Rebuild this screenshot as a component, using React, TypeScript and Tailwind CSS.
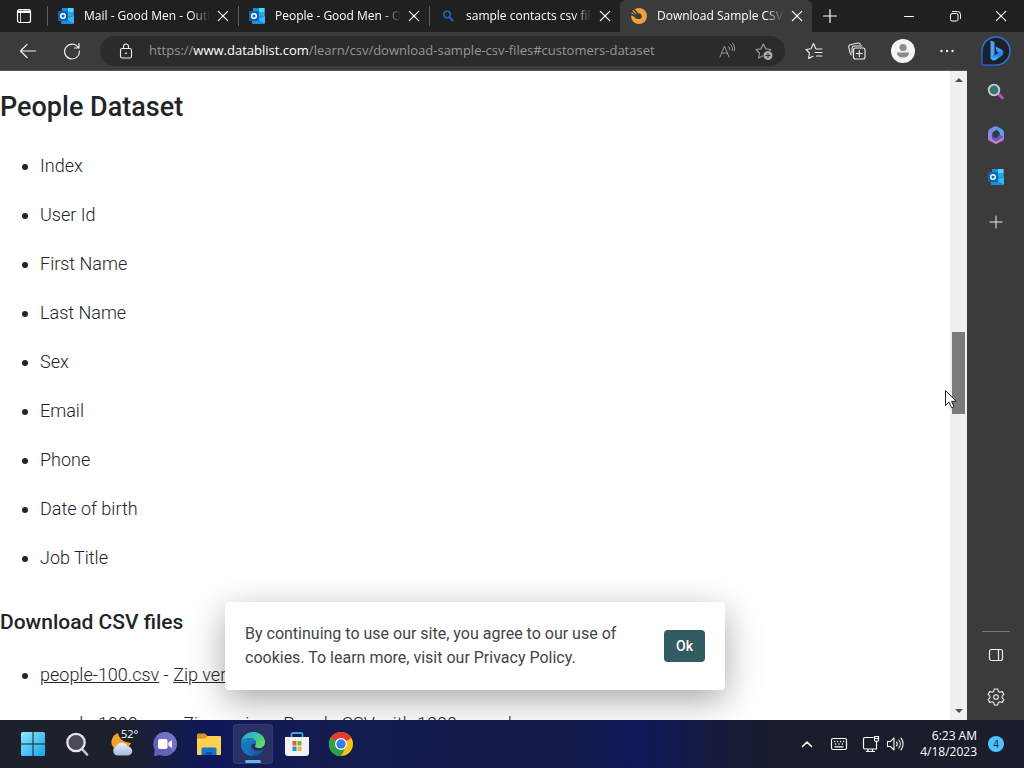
import React from 'react';

const tabs = [
    { title: 'Mail - Good Men - Outlook', icon: 'outlook', active: false },
    { title: 'People - Good Men - Outlook', icon: 'outlook', active: false },
    { title: 'sample contacts csv file - Search', icon: 'search', active: false },
    { title: 'Download Sample CSV Files', icon: 'datablist', active: true }
];

const columns = [
    'Index',
    'User Id',
    'First Name',
    'Last Name',
    'Sex',
    'Email',
    'Phone',
    'Date of birth',
    'Job Title'
];

const files = [
    { name: 'people-100.csv', desc: 'People CSV with 100 records' },
    { name: 'people-1000.csv', desc: 'People CSV with 1000 records' }
];

const line = {
    fill: 'none',
    stroke: 'currentColor',
    strokeLinecap: 'round' as const,
    strokeLinejoin: 'round' as const
};

const OutlookIcon = () => (
    <svg className="size-4 shrink-0" viewBox="0 0 16 16">
        <path d="M4 0h11.500v8H4z" fill="#1490df" />
        <path d="M10 0h5.500v4H10z" fill="#50d9ff" />
        <path d="M10 4h5.500v4H10z" fill="#28a8ea" />
        <path d="M4 4h6v5H4z" fill="#0364b8" />
        <path d="M3 8h13v7a1 1 0 0 1-1 1H4a1 1 0 0 1-1-1z" fill="#1a8fdb" />
        <path d="M16 8v7.500L8 11z" fill="#35b8f1" />
        <rect y="3" width="10" height="10" rx="1" fill="#0f62b5" />
        <circle cx="5" cy="8" r="2.300" fill="none" stroke="#fff" strokeWidth="1.500" />
    </svg>
);

const TabIcon = ({ name }: { name: string }) => {
    if (name === 'outlook') {
        return <OutlookIcon />;
    }
    if (name === 'search') {
        return (
            <svg className="size-4 shrink-0 text-[#1b68c9]" viewBox="0 0 16 16" {...line}>
                <circle cx="7" cy="6.500" r="3.300" strokeWidth="1.600" />
                <path d="M9.500 9.200l3 3.300" strokeWidth="1.900" />
            </svg>
        );
    }
    return (
        <svg className="size-4 shrink-0" viewBox="0 0 16 16">
            <circle cx="8" cy="8" r="8" fill="#eda13c" />
            <path d="M0 5.500C2 6.500 3.500 6.500 5 7c.5-2 3.500-2.500 5-.5 2 2.500 0 5-2.500 4.500C5 11 4 9.500 3 8.500L0 7.500z" fill="#3b3b3b" />
            <path d="M3 1l4 5.500M1 3.500L6 8" stroke="#3b3b3b" strokeWidth="1.500" />
        </svg>
    );
};

const Cross = ({ className }: { className: string }) => (
    <svg className={className} viewBox="0 0 12 12" {...line}>
        <path d="M2 2l8 8M10 2l-8 8" strokeWidth="1.100" />
    </svg>
);

const TabBar = () => (
    <div className="flex h-8 shrink-0 items-center bg-[#202020] text-white">
        <button aria-label="Tab actions" className="flex w-[47px] shrink-0 justify-center">
            <svg className="size-4" viewBox="0 0 16 16" {...line}>
                <rect x="1.500" y="1.500" width="13" height="13" rx="2" strokeWidth="1.200" />
                <path d="M2 3h12v1.500H2z" fill="currentColor" />
                <path d="M4.500 5v9" strokeWidth=".8" />
            </svg>
        </button>
        {tabs.map((tab) => (
            <div
                key={tab.title}
                className={
                    tab.active
                        ? 'flex h-8 w-48 items-center rounded-t-md bg-[#3b3b3b] pr-2 pl-[11px]'
                        : 'flex h-8 w-[191px] items-center pr-2'
                }
            >
                {!tab.active && <span className="mr-2.5 h-5 w-px shrink-0 bg-[#5c5c5c]" />}
                <button className="flex min-w-0 flex-1 items-center gap-2.5 text-left">
                    <TabIcon name={tab.icon} />
                    <span className="flex-1 overflow-hidden text-xs whitespace-nowrap [mask-image:linear-gradient(to_right,black_85%,transparent)]">
                        {tab.title}
                    </span>
                </button>
                <button aria-label="Close tab" className="ml-1.5 shrink-0">
                    <Cross className="size-3.5" />
                </button>
            </div>
        ))}
        <button aria-label="New tab" className="ml-2.5">
            <svg className="size-4" viewBox="0 0 16 16" {...line}>
                <path d="M8 1.500v13M1.500 8h13" strokeWidth="1.200" />
            </svg>
        </button>
        <div className="ml-auto flex shrink-0 items-center gap-8 pr-4">
            <button aria-label="Minimize">
                <svg className="size-3.5" viewBox="0 0 14 14" {...line}>
                    <path d="M2.500 7.500h9" />
                </svg>
            </button>
            <button aria-label="Restore">
                <svg className="size-3.5" viewBox="0 0 14 14" {...line}>
                    <rect x="2.500" y="4.500" width="7.500" height="7.500" rx="1.500" />
                    <path d="M4.500 2.500H9.500a3 3 0 0 1 3 3V9.500" />
                </svg>
            </button>
            <button aria-label="Close">
                <Cross className="size-3.5" />
            </button>
        </div>
    </div>
);

const Toolbar = () => (
    <div className="flex h-[39px] shrink-0 items-center border-b border-[#555] bg-[#3b3b3b] text-[#eee]">
        <button aria-label="Back" className="ml-[19px]">
            <svg className="size-[18px]" viewBox="0 0 18 18" {...line}>
                <path d="M16.500 9H1.500M8 2.500L1.500 9 8 15.500" strokeWidth="1.200" />
            </svg>
        </button>
        <button aria-label="Refresh" className="ml-[26px]">
            <svg className="size-[18px]" viewBox="0 0 18 18" {...line}>
                <path d="M15.500 6A7.400 7.400 0 1 0 16.400 9M16 1.500V6h-4.500" strokeWidth="1.200" />
            </svg>
        </button>
        <div className="ml-[19px] flex h-[30px] min-w-0 flex-1 items-center rounded-full bg-[#2b2b2b] pr-3 pl-[18px]">
            <svg className="size-4 shrink-0" viewBox="0 0 16 16" {...line}>
                <rect x="2.500" y="5.500" width="11" height="9.500" rx="1.800" strokeWidth="1.100" />
                <path d="M5.500 5.500V3.500a2.500 2.500 0 0 1 5 0v2" strokeWidth="1.100" />
                <circle cx="8" cy="10.300" r=".5" fill="currentColor" />
            </svg>
            <p className="ml-[15px] flex-1 overflow-hidden text-[13px] whitespace-nowrap text-[#969696]">
                https://<span className="text-white">www.datablist.com</span>
                /learn/csv/download-sample-csv-files#customers-dataset
            </p>
            <button aria-label="Read aloud" className="text-[#999]">
                <svg className="size-[18px]" viewBox="0 0 18 18" {...line}>
                    <path d="M1 15L5.500 4 10 15M2.600 11h5.800M9.500 4.500c1 .8 1.300 2 1 3.200M11.500 2.500c1.800 1.500 2.300 3.800 1.700 6M13.600 1.200c2 2 2.500 5 1.700 7.500" />
                </svg>
            </button>
            <button aria-label="Add to favorites" className="ml-[18px] text-[#999]">
                <svg className="size-[18px]" viewBox="0 0 18 18" {...line}>
                    <path d="M7.500 14L3.700 16l.8-5L1 7.500l5-.7L8.300 2l2.400 4.800 5 .7-1 1.200" strokeWidth="1.200" />
                    <circle cx="13" cy="13.500" r="4.500" fill="#aaa" stroke="none" />
                    <path d="M13 11.500v4M11 13.500h4" stroke="#2b2b2b" />
                </svg>
            </button>
        </div>
        <div className="flex items-center gap-6 pr-3 pl-5">
            <button aria-label="Favorites">
                <svg className="size-[18px]" viewBox="0 0 18 18" {...line}>
                    <path d="M11 7L8.500 1.500 6 6.700l-5 .8L4.500 11l-.9 5.500L8 14.300M11 7h6M10 10.500h7M11.500 14H17" strokeWidth="1.100" />
                </svg>
            </button>
            <button aria-label="Collections">
                <svg className="size-5" viewBox="0 0 20 20" {...line}>
                    <path d="M4.500 14l-1.300-1.500-1.500-6.500a2 2 0 0 1 1.500-2.300L11 2a2 2 0 0 1 2.300 1.500" strokeWidth="1.100" />
                    <path d="M5 12V7.500A2.500 2.500 0 0 1 7.500 5h7.500" strokeWidth="1.100" />
                    <rect x="6.500" y="7" width="11.500" height="11" rx="2" fill="#3b3b3b" strokeWidth="1.100" />
                    <path d="M12.300 9.500v6M9.300 12.500h6" strokeWidth="1.100" />
                </svg>
            </button>
            <button aria-label="Profile">
                <svg className="size-6" viewBox="0 0 24 24">
                    <circle cx="12" cy="12" r="12" fill="#f4f4f4" />
                    <circle cx="12" cy="8.500" r="3.600" fill="#8b8b8b" />
                    <path d="M6 13.500h12c.3 3-2.500 5-6 5s-6.300-2-6-5z" fill="#8b8b8b" />
                </svg>
            </button>
            <button aria-label="Settings and more">
                <svg className="size-4" viewBox="0 0 16 16" fill="currentColor">
                    <circle cx="2.500" cy="8" r="1.200" />
                    <circle cx="8" cy="8" r="1.200" />
                    <circle cx="13.500" cy="8" r="1.200" />
                </svg>
            </button>
        </div>
    </div>
);

const CookieNotice = () => (
    <div className="absolute bottom-[30px] left-1/2 flex w-[500px] -translate-x-1/2 items-center justify-between rounded bg-white p-5 shadow-[0_10px_35px_rgba(0,0,0,0.35)]">
        <p className="w-96 text-base text-[#444]">
            By continuing to use our site, you agree to our use of cookies. To learn more, visit
            our Privacy Policy.
        </p>
        <button className="h-8 rounded bg-[#335c62] px-3 text-sm font-medium text-white">Ok</button>
    </div>
);

const Scrollbar = () => (
    <div className="flex w-[17px] shrink-0 flex-col items-center bg-[#f0f0f0]">
        <svg className="h-[17px] w-2" viewBox="0 0 8 17" fill="#505050">
            <path d="M0 11l4-4 4 4z" />
        </svg>
        <div className="flex w-full flex-1 flex-col items-center">
            <div className="flex-[244]" />
            <div className="w-[13px] flex-[82] bg-[#7a7a7a]" />
            <div className="flex-[289]" />
        </div>
        <svg className="h-[17px] w-2" viewBox="0 0 8 17" fill="#505050">
            <path d="M0 6l4 4 4-4z" />
        </svg>
    </div>
);

const Page = () => (
    <div className="relative min-w-0 flex-1 overflow-hidden bg-white font-[Roboto,sans-serif] text-[#212529]">
        <h2 className="mt-5 text-[27px] leading-8 font-medium">People Dataset</h2>
        <ul className="mt-7 flex list-disc flex-col gap-5 pl-10 text-lg leading-[29px] font-light">
            {columns.map((column) => (
                <li key={column}>{column}</li>
            ))}
        </ul>
        <h3 className="mt-9 text-[21px] leading-7 font-medium">Download CSV files</h3>
        <ul className="mt-6 flex list-disc flex-col gap-5 pl-10 text-lg leading-[29px] font-light">
            {files.map((file) => (
                <li key={file.name}>
                    <a href={'#' + file.name} className="underline">
                        {file.name}
                    </a>
                    {' - '}
                    <a href={'#zip-' + file.name} className="underline">
                        Zip version
                    </a>
                    {' - ' + file.desc}
                </li>
            ))}
        </ul>
        <CookieNotice />
    </div>
);

const Sidebar = () => (
    <div className="flex w-[57px] shrink-0 flex-col items-center bg-[#3b3b3b] pt-1 pb-3.5 text-[#eee]">
        <button aria-label="Bing">
            <svg className="size-[30px]" viewBox="0 0 30 30">
                <defs>
                    <linearGradient id="bing-ring" x1="0" y1="1" x2="1" y2="0">
                        <stop offset="0" stopColor="#2b53d0" />
                        <stop offset=".5" stopColor="#1c7fd0" />
                        <stop offset="1" stopColor="#3868dc" />
                    </linearGradient>
                    <linearGradient id="bing-b" x1="0" y1="0" x2="0" y2="1">
                        <stop offset="0" stopColor="#54a8ff" />
                        <stop offset=".6" stopColor="#1b82f2" />
                        <stop offset="1" stopColor="#49c8f6" />
                    </linearGradient>
                </defs>
                <path d="M1 29V15A14 14 0 1 1 15 29z" fill="#1d2029" stroke="url(#bing-ring)" strokeWidth="1.500" />
                <path d="M9.500 4.500l4 1.500v12.500l-4 4z" fill="#4aa3fb" />
                <path d="M14.500 10.500l6.500 3.200c2 1.800 1.800 4.600-.2 6L14.500 24c-2.500 1.200-5 0-5-3l8-4-1.800-1.500z" fill="url(#bing-b)" />
            </svg>
        </button>
        <button aria-label="Search" className="mt-[17px]">
            <svg className="size-[18px]" viewBox="0 0 18 18" fill="none" strokeLinecap="round">
                <path d="M11.500 11l4 4" stroke="#b04cd2" strokeWidth="3" />
                <circle cx="7" cy="7" r="5.300" fill="#357378" stroke="#c9cdcb" strokeWidth="1.800" />
            </svg>
        </button>
        <button aria-label="Microsoft 365" className="mt-[25px]">
            <svg className="size-[18px]" viewBox="0 0 18 18">
                <path d="M7 .5L2.500 3Q1 4 1 6v6l4.500 2V6.500L12 2z" fill="#7f8ae6" />
                <path d="M7 .5l2.500-.3 6 3.300Q17 4.500 17 6.500V12l-4.500-3V6.500z" fill="#5c9ff0" />
                <path d="M1 10.500l8 4.500 8-5v2.500Q17 14 15 15l-5 2.700q-1 .5-2 0L2 14.500q-1-.6-1-2z" fill="#c77bc9" />
                <path d="M12.500 9l4.500 2-8 4.500-5-3z" fill="#5a5fc4" />
                <path d="M5.500 7.500L9 5.500l4 2.300L9.500 12l-4-1.500z" fill="#363849" />
            </svg>
        </button>
        <button aria-label="Outlook" className="mt-[25px]">
            <OutlookIcon />
        </button>
        <button aria-label="Add app" className="mt-[30px]">
            <svg className="size-3.5" viewBox="0 0 14 14" {...line}>
                <path d="M7 1v12M1 7h12" />
            </svg>
        </button>
        <div className="mt-auto h-px w-7 bg-[#777]" />
        <button aria-label="Hide sidebar" className="mt-[15px]">
            <svg className="size-4" viewBox="0 0 16 16" {...line}>
                <rect x="1.500" y="2.500" width="13" height="11" rx="2" strokeWidth="1.200" />
                <path d="M10.500 3v10" strokeWidth="1.200" />
            </svg>
        </button>
        <button aria-label="Sidebar settings" className="mt-[25px]">
            <svg className="size-[18px]" viewBox="0 0 18 18" {...line}>
                <path d="M7.300 1h3.400l.6 2.400 1.500.8 2.300-.8 1.800 3-1.800 1.700v1.800l1.800 1.700-1.800 3-2.300-.8-1.500.8-.6 2.400H7.300l-.6-2.400-1.500-.8-2.300.8-1.800-3 1.800-1.700V8.100L1.100 6.400l1.800-3 2.300.8 1.500-.8z" strokeWidth="1.100" />
                <circle cx="9" cy="9" r="2.300" strokeWidth="1.100" />
            </svg>
        </button>
    </div>
);

const StartIcon = () => (
    <svg className="size-6" viewBox="0 0 24 24">
        <defs>
            <linearGradient id="start" x1="0" y1="0" x2="1" y2="1">
                <stop offset="0" stopColor="#8be8ff" />
                <stop offset="1" stopColor="#17a2e5" />
            </linearGradient>
        </defs>
        <path d="M1.500 0H11.500V11.500H0V1.500Q0 0 1.500 0zM12.500 0h10Q24 0 24 1.500v10H12.500zM0 12.500h11.500V24h-10Q0 24 0 22.500zM12.500 12.500H24v10Q24 24 22.500 24h-10z" fill="url(#start)" />
    </svg>
);

const SearchIcon = () => (
    <svg className="size-6" viewBox="0 0 24 24" strokeLinecap="round">
        <path d="M17 17l5 5.500" stroke="#c9c9d0" strokeWidth="2.600" />
        <circle cx="11" cy="10.500" r="8.700" fill="#484b55" stroke="#e6e6ea" strokeWidth="2.200" />
    </svg>
);

const WeatherIcon = () => (
    <span className="relative">
        <svg className="size-6" viewBox="0 0 24 24">
            <defs>
                <linearGradient id="cloud" x1="0" y1="0" x2="0" y2="1">
                    <stop offset="0" stopColor="#eef2fb" />
                    <stop offset="1" stopColor="#9fb8e6" />
                </linearGradient>
            </defs>
            <path d="M9 1c1 5 4 9 13 10-2 5-7 8-12 7C4 17 1 12 3 7c1-3 3-5 6-6z" fill="#f4a12a" />
            <path d="M8 23.500a5 5 0 0 1-.5-9.500A6 6 0 0 1 18.500 14.500a4.500 4.500 0 0 1 .5 9z" fill="url(#cloud)" />
        </svg>
        <span className="absolute -top-1.5 left-3 text-[11px] text-white">52°</span>
    </span>
);

const ChatIcon = () => (
    <svg className="size-6" viewBox="0 0 24 24">
        <path d="M12 0a12 12 0 1 1-5 23L1 24l.8-6A12 12 0 0 1 12 0z" fill="#6661b8" />
        <path d="M12 0a12 12 0 0 1 9 20L3 4a12 12 0 0 1 9-4z" fill="#8580d0" opacity=".5" />
        <rect x="5" y="7" width="9.500" height="10" rx="1.800" fill="#fff" />
        <path d="M15.500 10.500L19 8v8l-3.500-2.500z" fill="#fff" />
    </svg>
);

const FolderIcon = () => (
    <svg className="size-6" viewBox="0 0 24 24">
        <path d="M0 3Q0 1.500 1.500 1.500H8l3 3H10L8 8H0z" fill="#d99a1c" />
        <path d="M0 6.500h8L10.500 4H23q1 0 1 1v17q0 1-1 1H1q-1 0-1-1z" fill="#fdcf52" />
        <path d="M4.500 23v-6q0-1.500 1.500-1.500h12q1.500 0 1.500 1.500v6z" fill="#1476cc" />
        <path d="M8.500 23v-3h7v3z" fill="#0b57a2" />
    </svg>
);

const EdgeIcon = () => (
    <svg className="size-6" viewBox="0 0 24 24">
        <defs>
            <linearGradient id="edge-top" x1="0" y1="0" x2="1" y2=".6">
                <stop offset="0" stopColor="#36a6e4" />
                <stop offset=".5" stopColor="#32c0b7" />
                <stop offset="1" stopColor="#66dc54" />
            </linearGradient>
            <linearGradient id="edge-low" x1="0" y1="0" x2="1" y2="1">
                <stop offset="0" stopColor="#1b8fdc" />
                <stop offset="1" stopColor="#104d91" />
            </linearGradient>
        </defs>
        <path d="M0 11c1-2 4-5 9-5 4 0 6 3 6 6-6-2-7 6 1 7 3 0 5-1 7-2-2 4-6 7-11 7C5 24 0 18 0 11z" fill="url(#edge-low)" />
        <path d="M8 9c-4 4-2 11 4 15C5 24 0 19 0 12z" fill="#1177c2" />
        <path d="M0 11C1 4 6 0 12 0c7 0 12 5 12 10 0 4-3 6-6 6-2 0-4-.6-4-2 0-.8 1-1 1-3 0-3-3-5-6-5-5 0-8 2-9 5z" fill="url(#edge-top)" />
    </svg>
);

const StoreIcon = () => (
    <svg className="size-6" viewBox="0 0 24 24">
        <path d="M6.500 7V2.500Q6.500 1 8 1h8q1.500 0 1.500 1.500V7" fill="none" stroke="#38a5dc" strokeWidth="1.800" />
        <path d="M0 5h24v16q0 3-3 3H3q-3 0-3-3z" fill="#f1f2f5" />
        <path d="M7.500 9h4v4.500h-4z" fill="#e25a36" />
        <path d="M12.500 9h4v4.500h-4z" fill="#79ae2e" />
        <path d="M7.500 14.500h4V19h-4z" fill="#2493d8" />
        <path d="M12.500 14.500h4V19h-4z" fill="#eeb32a" />
    </svg>
);

const ChromeIcon = () => (
    <svg className="size-6" viewBox="0 0 24 24">
        <circle cx="12" cy="12" r="12" fill="#fbc116" />
        <path d="M12 12L1.600 6A12 12 0 0 1 22.400 6z" fill="#e33b2e" />
        <path d="M1.600 6A12 12 0 0 0 12 24l5.200-9z" fill="#2da04c" />
        <circle cx="12" cy="12" r="6" fill="#fff" />
        <circle cx="12" cy="12" r="4.700" fill="#3b7de8" />
    </svg>
);

const apps = [
    { name: 'Start', Icon: StartIcon },
    { name: 'Search', Icon: SearchIcon },
    { name: 'Weather', Icon: WeatherIcon },
    { name: 'Chat', Icon: ChatIcon },
    { name: 'File Explorer', Icon: FolderIcon },
    { name: 'Microsoft Edge', Icon: EdgeIcon, active: true },
    { name: 'Microsoft Store', Icon: StoreIcon },
    { name: 'Google Chrome', Icon: ChromeIcon }
];

const Taskbar = () => (
    <div className="flex h-12 shrink-0 items-center justify-between bg-[linear-gradient(to_right,#1c212b_12%,#10185a_20%,#141c4e_32%,#141b4a_56%,#10195a_62%,#1a1d2b_76%)] pr-5 pl-[13px] text-white">
        <div className="flex gap-1">
            {apps.map(({ name, Icon, active }) => (
                <button
                    key={name}
                    aria-label={name}
                    className={
                        active
                            ? 'relative flex size-10 items-center justify-center rounded border border-white/5 bg-white/10'
                            : 'relative flex size-10 items-center justify-center'
                    }
                >
                    <Icon />
                    {active && (
                        <span className="absolute bottom-0 h-[3px] w-4 rounded-full bg-[#5fb7ef]" />
                    )}
                </button>
            ))}
        </div>
        <div className="flex items-center">
            <svg className="size-3.5" viewBox="0 0 14 14" {...line}>
                <path d="M2.500 9.500L7 5l4.500 4.500" strokeWidth="1.600" />
            </svg>
            <svg className="ml-4 size-[18px]" viewBox="0 0 18 18" {...line}>
                <rect x="1.500" y="3.500" width="15" height="11" rx="1.500" strokeWidth="1.200" />
                <path d="M4.500 6.500h.2M7.500 6.500h.2M10.500 6.500h.2M13.500 6.500h.2M5.500 9h.2M8.900 9h.2M12.200 9h.2M5 11.800h8" strokeWidth="1.300" />
            </svg>
            <svg className="ml-3.5 size-[18px]" viewBox="0 0 18 18" {...line}>
                <path d="M11 2.500H3Q1.500 2.500 1.500 4v8.500Q1.500 14 3 14h11.500V8M6 14v2.500M10.500 14v2.500M4.500 16.500h8M14.500 6v3" strokeWidth="1.200" />
                <path d="M12.500 1.500h4v3.500q0 1.500-2 1.500t-2-1.500zM12.500 3.500h4" strokeWidth="1.200" />
            </svg>
            <svg className="ml-1.5 size-[18px]" viewBox="0 0 18 18" {...line}>
                <path d="M1.500 6.500h3L8 3v12l-3.500-3.500h-3zM10.500 7c1 1.200 1 2.800 0 4M12.700 5c2 2.300 2 5.700 0 8M15 3.200c2.700 3.300 2.700 8.300 0 11.600" strokeWidth="1.100" />
            </svg>
            <p className="ml-4 text-right text-[12px] leading-4">
                6:23 AM
                <br />
                4/18/2023
            </p>
            <span className="ml-[11px] flex size-4 items-center justify-center rounded-full bg-[#4cc2ff] text-[10px] text-[#10222d]">
                4
            </span>
        </div>
    </div>
);

const App = () => {
    return (
        <div className="relative flex h-screen flex-col overflow-hidden font-['Open_Sans',sans-serif]">
            <TabBar />
            <div className="flex min-h-0 flex-1">
                <div className="flex min-w-0 flex-1 flex-col">
                    <Toolbar />
                    <div className="flex min-h-0 flex-1">
                        <Page />
                        <Scrollbar />
                    </div>
                </div>
                <Sidebar />
            </div>
            <Taskbar />
            {/* mouse pointer */}
            <svg className="absolute top-[389px] left-[944px] h-5 w-3.5" viewBox="0 0 14 20">
                <path d="M1.500 1.500v15l3.500-3.300 2.600 5.600 2.400-1.100-2.500-5.400h4.700z" fill="#fff" stroke="#222" />
            </svg>
        </div>
    );
};

export default App;
